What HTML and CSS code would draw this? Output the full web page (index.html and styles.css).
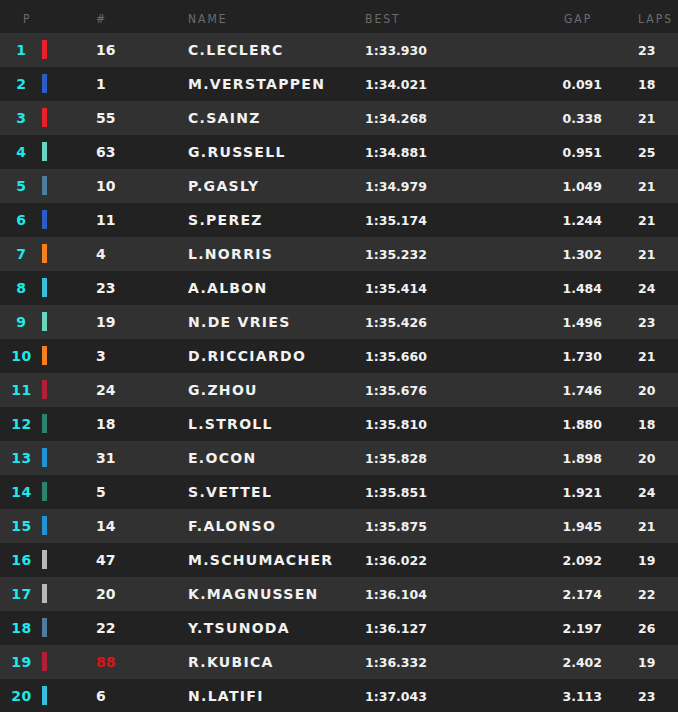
FILE: index.html
```html
<!DOCTYPE html>
<html>
<head>
<meta charset="utf-8">
<link rel="stylesheet" href="styles.css">
</head>
<body>
<div class="board">
  <div class="row head">
    <div class="c-pos">P</div>
    <div class="c-bar"></div>
    <div class="c-num">#</div>
    <div class="c-name">NAME</div>
    <div class="c-best">BEST</div>
    <div class="c-gap">GAP</div>
    <div class="c-laps">LAPS</div>
  </div>
  <div class="row odd"><div class="c-pos">1</div><div class="c-bar"><span class="bar fer"></span></div><div class="c-num">16</div><div class="c-name">C.LECLERC</div><div class="c-best">1:33.930</div><div class="c-gap"></div><div class="c-laps">23</div></div>
  <div class="row"><div class="c-pos">2</div><div class="c-bar"><span class="bar rbr"></span></div><div class="c-num">1</div><div class="c-name">M.VERSTAPPEN</div><div class="c-best">1:34.021</div><div class="c-gap">0.091</div><div class="c-laps">18</div></div>
  <div class="row odd"><div class="c-pos">3</div><div class="c-bar"><span class="bar fer"></span></div><div class="c-num">55</div><div class="c-name">C.SAINZ</div><div class="c-best">1:34.268</div><div class="c-gap">0.338</div><div class="c-laps">21</div></div>
  <div class="row"><div class="c-pos">4</div><div class="c-bar"><span class="bar mer"></span></div><div class="c-num">63</div><div class="c-name">G.RUSSELL</div><div class="c-best">1:34.881</div><div class="c-gap">0.951</div><div class="c-laps">25</div></div>
  <div class="row odd"><div class="c-pos">5</div><div class="c-bar"><span class="bar alt"></span></div><div class="c-num">10</div><div class="c-name">P.GASLY</div><div class="c-best">1:34.979</div><div class="c-gap">1.049</div><div class="c-laps">21</div></div>
  <div class="row"><div class="c-pos">6</div><div class="c-bar"><span class="bar rbr"></span></div><div class="c-num">11</div><div class="c-name">S.PEREZ</div><div class="c-best">1:35.174</div><div class="c-gap">1.244</div><div class="c-laps">21</div></div>
  <div class="row odd"><div class="c-pos">7</div><div class="c-bar"><span class="bar mcl"></span></div><div class="c-num">4</div><div class="c-name">L.NORRIS</div><div class="c-best">1:35.232</div><div class="c-gap">1.302</div><div class="c-laps">21</div></div>
  <div class="row"><div class="c-pos">8</div><div class="c-bar"><span class="bar wil"></span></div><div class="c-num">23</div><div class="c-name">A.ALBON</div><div class="c-best">1:35.414</div><div class="c-gap">1.484</div><div class="c-laps">24</div></div>
  <div class="row odd"><div class="c-pos">9</div><div class="c-bar"><span class="bar mer"></span></div><div class="c-num">19</div><div class="c-name">N.DE VRIES</div><div class="c-best">1:35.426</div><div class="c-gap">1.496</div><div class="c-laps">23</div></div>
  <div class="row"><div class="c-pos">10</div><div class="c-bar"><span class="bar mcl"></span></div><div class="c-num">3</div><div class="c-name">D.RICCIARDO</div><div class="c-best">1:35.660</div><div class="c-gap">1.730</div><div class="c-laps">21</div></div>
  <div class="row odd"><div class="c-pos">11</div><div class="c-bar"><span class="bar alf"></span></div><div class="c-num">24</div><div class="c-name">G.ZHOU</div><div class="c-best">1:35.676</div><div class="c-gap">1.746</div><div class="c-laps">20</div></div>
  <div class="row"><div class="c-pos">12</div><div class="c-bar"><span class="bar ast"></span></div><div class="c-num">18</div><div class="c-name">L.STROLL</div><div class="c-best">1:35.810</div><div class="c-gap">1.880</div><div class="c-laps">18</div></div>
  <div class="row odd"><div class="c-pos">13</div><div class="c-bar"><span class="bar alp"></span></div><div class="c-num">31</div><div class="c-name">E.OCON</div><div class="c-best">1:35.828</div><div class="c-gap">1.898</div><div class="c-laps">20</div></div>
  <div class="row"><div class="c-pos">14</div><div class="c-bar"><span class="bar ast"></span></div><div class="c-num">5</div><div class="c-name">S.VETTEL</div><div class="c-best">1:35.851</div><div class="c-gap">1.921</div><div class="c-laps">24</div></div>
  <div class="row odd"><div class="c-pos">15</div><div class="c-bar"><span class="bar alp"></span></div><div class="c-num">14</div><div class="c-name">F.ALONSO</div><div class="c-best">1:35.875</div><div class="c-gap">1.945</div><div class="c-laps">21</div></div>
  <div class="row"><div class="c-pos">16</div><div class="c-bar"><span class="bar haa"></span></div><div class="c-num">47</div><div class="c-name">M.SCHUMACHER</div><div class="c-best">1:36.022</div><div class="c-gap">2.092</div><div class="c-laps">19</div></div>
  <div class="row odd"><div class="c-pos">17</div><div class="c-bar"><span class="bar haa"></span></div><div class="c-num">20</div><div class="c-name">K.MAGNUSSEN</div><div class="c-best">1:36.104</div><div class="c-gap">2.174</div><div class="c-laps">22</div></div>
  <div class="row"><div class="c-pos">18</div><div class="c-bar"><span class="bar alt"></span></div><div class="c-num">22</div><div class="c-name">Y.TSUNODA</div><div class="c-best">1:36.127</div><div class="c-gap">2.197</div><div class="c-laps">26</div></div>
  <div class="row odd"><div class="c-pos">19</div><div class="c-bar"><span class="bar alf"></span></div><div class="c-num red">88</div><div class="c-name">R.KUBICA</div><div class="c-best">1:36.332</div><div class="c-gap">2.402</div><div class="c-laps">19</div></div>
  <div class="row"><div class="c-pos">20</div><div class="c-bar"><span class="bar wil"></span></div><div class="c-num">6</div><div class="c-name">N.LATIFI</div><div class="c-best">1:37.043</div><div class="c-gap">3.113</div><div class="c-laps">23</div></div>
</div>
</body>
</html>
```
FILE: styles.css
```css
html, body {
  margin: 0;
  padding: 0;
  background: #222222;
}
body {
  font-family: "DejaVu Sans", sans-serif;
  color: #f2f2f2;
  font-weight: bold;
}
.board {
  display: flex;
  flex-direction: column;
}
.row {
  display: grid;
  grid-template-columns: 42px 54px 92px 177px 160px 77px 1fr;
  align-items: center;
  height: 34px;
  background: #222222;
}
.row.odd {
  background: #313131;
}
.c-pos {
  text-align: center;
  color: #1ee8e8;
  font-size: 14px;
  letter-spacing: 0.6px;
  padding-left: 1px;
}
.c-bar {
  display: flex;
  align-items: center;
}
.bar {
  display: block;
  width: 5px;
  height: 19px;
  margin-top: -1px;
}
.c-num {
  font-size: 14px;
  letter-spacing: 0;
}
.c-num.red { color: #d21818; }
.c-name {
  font-size: 14px;
  letter-spacing: 1.3px;
}
.c-best {
  font-size: 12.5px;
  letter-spacing: 0;
}
.c-gap {
  font-size: 12.5px;
  letter-spacing: 0;
  text-align: right;
}
.c-laps {
  font-size: 12.5px;
  letter-spacing: 0;
  padding-left: 36px;
}

/* header row */
.row.head {
  height: 33px;
  align-items: end;
  padding-bottom: 8px;
  box-sizing: border-box;
}
.head > div {
  font-family: "DejaVu Sans Condensed", "DejaVu Sans", sans-serif;
  font-weight: normal;
  font-size: 12px;
  letter-spacing: 2px;
  color: #6c6c6c;
  line-height: 12px;
}
.head .c-pos {
  text-align: left;
  padding-left: 23px;
}
.head .c-gap {
  text-align: left;
  padding-left: 39px;
}

.fer { background: #e8202a; }
.rbr { background: #2b5cc6; }
.mer { background: #6cd3bf; }
.alt { background: #4e7c9b; }
.mcl { background: #f58020; }
.wil { background: #37bedd; }
.alf { background: #b12039; }
.ast { background: #2d826d; }
.alp { background: #2293d1; }
.haa { background: #b6babd; }
```
